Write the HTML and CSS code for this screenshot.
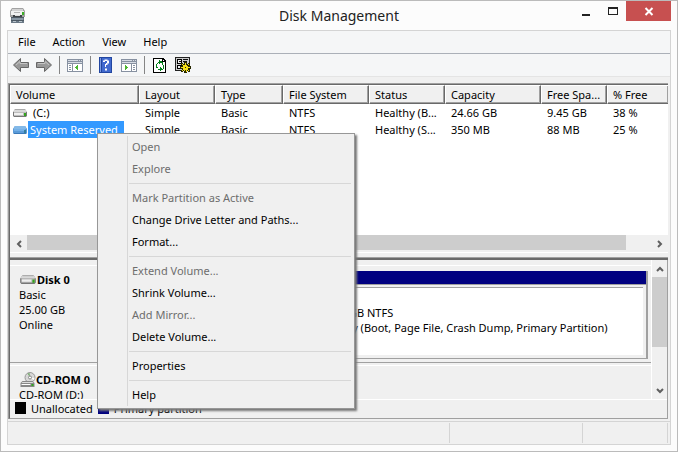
FILE: index.html
```html
<!DOCTYPE html>
<html lang="en">
<head>
<meta charset="utf-8">
<title>Disk Management</title>
<link rel="stylesheet" href="styles.css">
</head>
<body>
<svg class="defs" aria-hidden="true">
  <symbol id="drive" viewBox="0 0 16 10">
    <path d="M3 1h10l2 3v4l-1 1H2L1 8V4z" fill="#8b8b8b"/>
    <path d="M3 1h10l2 3H1z" fill="#d9d9d9"/>
    <path d="M3 1h10v1H3z" fill="#a9a9a9"/>
    <path d="M1 4h14v4H1z" fill="#bdbdbd"/>
    <path d="M2 5h9v2H2z" fill="#efefef"/>
    <path d="M1 4h1v4H1zM14 4h1v4h-1zM2 8h12v1H2z" fill="#777"/>
    <path d="M12 5h2v3h-2z" fill="#33a51d"/>
  </symbol>
  <symbol id="drive-selected" viewBox="0 0 16 10">
    <path d="M3 1h10l2 3v4l-1 1H2L1 8V4z" fill="#3979b8"/>
    <path d="M3 1h10l2 3H1z" fill="#83b9e8"/>
    <path d="M1 4h14v4H1z" fill="#5b9bd8"/>
    <path d="M2 4h11v2H2z" fill="#75b1e7"/>
    <path d="M12 5h2v3h-2z" fill="#357f9e"/>
  </symbol>
</svg>

<div class="window">
  <header class="titlebar">
    <svg class="app-icon" viewBox="0 0 18 16" aria-hidden="true">
      <path d="M2 9h13v6H2z" fill="#6b7986"/>
      <path d="M2 9h13v1H2zM2 12h13v1H2z" fill="#4d5964"/>
      <path d="M3 10h11v2H3z" fill="#8a98a5"/>
      <path d="M4 13h3v1H4zM10 13h3v1h-3z" fill="#b9c4cc"/>
      <path d="M3 0h11l2 3v6H1V3z" fill="#a2a2a2"/>
      <path d="M3 1h11v2H3z" fill="#d2d2d2"/>
      <path d="M2 3h13v4H2z" fill="#f1f1f1"/>
      <path d="M4 7h9v2H4z" fill="#3e4246"/>
      <path d="M5 4h6v1H5z" fill="#b4b4b4"/>
      <path d="M6 7h5v1H6z" fill="#ddd"/>
      <path d="M13 4h2v3h-2z" fill="#3caf27"/>
    </svg>
    <h1 class="title">Disk Management</h1>
    <div class="caption-buttons">
      <button class="caption" aria-label="Minimize"><svg viewBox="0 0 10 10"><path d="M1 8h8v2H1z"/></svg></button>
      <button class="caption" aria-label="Maximize"><svg viewBox="0 0 10 10"><path d="M0 1h10v8H0zM1 3v5h8V3z" fill-rule="evenodd"/></svg></button>
      <button class="caption close" aria-label="Close"><svg viewBox="0 0 10 10"><path d="M1.500 2l7 7M8.500 2l-7 7" fill="none" stroke="#fff" stroke-width="2"/></svg></button>
    </div>
  </header>

  <main class="client">
    <nav class="menubar" aria-label="Main">
      <button>File</button><button>Action</button><button>View</button><button>Help</button>
    </nav>

    <div class="toolbar" role="toolbar">
      <button aria-label="Back"><svg viewBox="0 0 16 16"><path d="M.5 8l7-6.500v4h8v5h-8v4z" fill="#999" stroke="#666"/><path d="M3 8l4-3.500v2h7" fill="none" stroke="#c4c4c4"/></svg></button>
      <button aria-label="Forward"><svg viewBox="0 0 16 16"><path d="M15.500 8l-7-6.500v4h-8v5h8v4z" fill="#999" stroke="#666"/><path d="M2 6.500h7v-2L13 8" fill="none" stroke="#c4c4c4"/></svg></button>
      <span class="divider"></span>
      <button aria-label="Show console tree"><svg viewBox="0 0 16 16" shape-rendering="crispEdges"><path d="M0 2h16v13H0z" fill="#8791a1"/><path d="M1 5h14v9H1z" fill="#fff"/><path d="M1 3h10v1H1zM12 3h1v1h-1zM14 3h1v1h-1zM1 5h14v1H1z" fill="#d7dce4"/><path d="M1 6h14v1H1zM5 7h1v7H5zM2 8h2v1H2zM2 10h2v1H2zM2 12h2v1H2z" fill="#8791a1"/><path d="M10 8h1v5h-1v-1H9v-1H8v-1h1V9h1z" fill="#4cb530"/></svg></button>
      <span class="divider"></span>
      <button aria-label="Help topics"><svg viewBox="0 0 16 16"><path d="M1 0h13v16H1z" fill="#2246a0"/><path d="M4 1h9v14H4z" fill="#4169ce"/><path d="M2 1h1v14H2z" fill="#7c9be3"/><path d="M5 5V3.500h1.500v-1h3v1H11v3H9.500V8H8v2H7V7h1V6h1V4H7v1zM7 11.500h2v2H7z" fill="#fff"/></svg></button>
      <button aria-label="Show action pane"><svg viewBox="0 0 16 16" shape-rendering="crispEdges"><path d="M0 2h16v13H0z" fill="#8791a1"/><path d="M1 5h14v9H1z" fill="#fff"/><path d="M1 3h10v1H1zM12 3h1v1h-1zM14 3h1v1h-1zM1 5h14v1H1z" fill="#d7dce4"/><path d="M1 6h14v1H1zM10 7h1v7h-1zM12 8h2v1h-2zM12 10h2v1h-2zM12 12h2v1h-2z" fill="#8791a1"/><path d="M4 8h1v1h1v1h1v1H6v1H5v1H4z" fill="#4cb530"/></svg></button>
      <span class="divider"></span>
      <button aria-label="Refresh"><svg viewBox="0 0 16 16" shape-rendering="crispEdges"><path d="M1 1h10l3 3v12H1z" fill="#000"/><path d="M2 2h8v3h3v10H2z" fill="#fff"/><path d="M11 3h1v1h-1z" fill="#fff"/><path d="M7 3h1v1h2v1h1v3h-1V6H8v1H7V6H6V5h1zM5 6h1v1H5zM4 7h1v3h1v1H4zM11 8h1v4h-1zM8 10h1v1h1v1h1v1H9v1H8v-1H6v-1h2z" fill="#008018"/></svg></button>
      <button aria-label="Settings"><svg viewBox="0 0 16 16" shape-rendering="crispEdges"><path d="M0 0h15v14H0z" fill="#222"/><path d="M1 1h13v12H1z" fill="#ccc"/><path d="M2 2h5v5H2zM2 8h5v4H2z" fill="#000"/><path d="M3 3h3v3H3zM3 9h3v2H3z" fill="#eee"/><path d="M4 4h2v1H4zM8 2h5v1H8zM8 4h4v1H8z" fill="#111"/><path d="M9 5h3v2h1V6h2v2h-1v1h2v3h-2v1h1v2h-2v-1h-1v2H9v-2H8v1H6v-2h1v-1H5V9h2V8H6V6h2v1h1z" fill="#272700"/><path d="M10 6h1v2h1v1h1V7h1v1h-1v2h2v1h-2v2h1v1h-1v-1h-1v2h-1v-2h-1v1H9v-1H8v1H7v-1h1v-2H6v-1h2V8H7V7h1v1h2z" fill="#f4df19"/><path d="M10 10h1v1h-1z" fill="#222"/></svg></button>
    </div>

    <div class="workspace">
      <section class="volumes">
        <table class="volume-table">
          <colgroup><col class="c-volume"><col class="c-medium"><col class="c-type"><col class="c-fs"><col class="c-medium"><col class="c-capacity"><col class="c-free"><col></colgroup>
          <thead>
            <tr><th>Volume</th><th>Layout</th><th>Type</th><th>File System</th><th>Status</th><th>Capacity</th><th>Free Spa...</th><th>% Free</th></tr>
          </thead>
          <tbody>
            <tr><td><span class="volume"><svg class="drive"><use href="#drive"/></svg><span class="name">(C:)</span></span></td><td>Simple</td><td>Basic</td><td>NTFS</td><td>Healthy (B...</td><td>24.66 GB</td><td>9.45 GB</td><td>38 %</td></tr>
            <tr><td><span class="volume"><svg class="drive"><use href="#drive-selected"/></svg><span class="name selected">System Reserved</span></span></td><td>Simple</td><td>Basic</td><td>NTFS</td><td>Healthy (S...</td><td>350 MB</td><td>88 MB</td><td>25 %</td></tr>
          </tbody>
        </table>
        <div class="hscroll">
          <button aria-label="Scroll left"><svg viewBox="0 0 8 8"><path d="M6 1L3 4l3 3"/></svg></button>
          <div class="htrack"><div class="hthumb"></div></div>
          <button aria-label="Scroll right"><svg viewBox="0 0 8 8"><path d="M2 1l3 3-3 3"/></svg></button>
        </div>
        <div class="splitter"></div>
      </section>

      <section class="disks">
        <div class="disk-view">
          <div class="disk-list">
            <article class="disk">
              <div class="disk-info">
                <h2><svg class="drive"><use href="#drive"/></svg>Disk 0</h2>
                <p>Basic</p><p>25.00 GB</p><p>Online</p>
              </div>
              <div class="partition reserved">
                <div class="stripe"></div>
                <div class="partition-body"></div>
              </div>
              <div class="partition">
                <div class="stripe"></div>
                <div class="partition-body"><strong>(C:)</strong><p>24.66 GB NTFS</p><p>Healthy (Boot, Page File, Crash Dump, Primary Partition)</p></div>
              </div>
            </article>
            <article class="disk cdrom">
              <div class="disk-info">
                <h2><svg class="cd" viewBox="0 0 16 16"><circle cx="10.500" cy="5.500" r="5" fill="#d8d8d8" stroke="#999"/><path d="M10.500 5.500L8 1.500l2-.5z" fill="#75a96c"/><path d="M10.500 5.500l4 2.500.5-2z" fill="#fff"/><circle cx="10.500" cy="5.500" r="1.500" fill="#fff" stroke="#888"/><path d="M3 9h10l2 2v4H1v-4z" fill="#888"/><path d="M3 10h10l1 1H2z" fill="#ddd"/><path d="M2 12h9v1H2z" fill="#fff"/><path d="M12 12h2v2h-2z" fill="#31a721"/></svg>CD-ROM 0</h2>
                <p>CD-ROM (D:)</p>
              </div>
            </article>
          </div>
          <div class="vscroll">
            <button aria-label="Scroll up"><svg viewBox="0 0 8 8"><path d="M1 6l3-3 3 3"/></svg></button>
            <div class="vtrack"><div class="vthumb"></div></div>
            <button aria-label="Scroll down"><svg viewBox="0 0 8 8"><path d="M1 2l3 3 3-3"/></svg></button>
          </div>
        </div>
        <div class="legend">
          <span class="swatch"></span><span>Unallocated</span>
          <span class="swatch primary"></span><span>Primary partition</span>
        </div>
      </section>
    </div>

    <footer class="statusbar"><span class="grow"></span><span></span><span class="last"></span></footer>
  </main>

  <div class="context-menu" role="menu">
    <button role="menuitem" disabled>Open</button>
    <button role="menuitem" disabled>Explore</button>
    <hr>
    <button role="menuitem" disabled>Mark Partition as Active</button>
    <button role="menuitem">Change Drive Letter and Paths...</button>
    <button role="menuitem">Format...</button>
    <hr>
    <button role="menuitem" disabled>Extend Volume...</button>
    <button role="menuitem">Shrink Volume...</button>
    <button role="menuitem" disabled>Add Mirror...</button>
    <button role="menuitem">Delete Volume...</button>
    <hr>
    <button role="menuitem">Properties</button>
    <hr>
    <button role="menuitem">Help</button>
  </div>
</div>
</body>
</html>
```
FILE: styles.css
```css
* { box-sizing: border-box; }

body {
  margin: 0;
  color: #000;
  font: 11px/15px "Segoe UI", "Noto Sans", sans-serif;
}

h1, h2, p { margin: 0; font-size: inherit; }

button {
  padding: 0;
  border: 0;
  background: none;
  color: inherit;
  font: inherit;
}

.defs { position: absolute; width: 0; height: 0; }

.window {
  position: relative;
  display: flex;
  flex-direction: column;
  min-height: 100vh;
  padding: 0 6px 6px;
  border: 1px solid #bbb;
  background: #fcfcfc;
}

.titlebar {
  display: grid;
  grid-template-columns: 1fr auto 1fr;
  align-items: center;
  height: 29px;
}
.app-icon { width: 18px; height: 16px; margin-left: 2px; }
.title { color: #222; font-size: 14px; font-weight: 400; line-height: 20px; }
.caption-buttons { display: flex; justify-content: flex-end; align-self: start; }
.caption { width: 27px; height: 20px; }
.caption svg { display: block; width: 10px; height: 10px; margin: auto; fill: #222; }
.caption.close { width: 45px; background: #c75050; }

.client {
  display: flex;
  flex: 1;
  flex-direction: column;
  border: 1px solid #d4d4d4;
  background: #f0f0f0;
}

.menubar {
  display: flex;
  gap: 17px;
  height: 23px;
  padding: 0 0 2px 10px;
  border-bottom: 1px solid #abb0b8;
  background: #f5f6f7;
}

.toolbar {
  display: flex;
  align-items: center;
  height: 23px;
  padding-left: 5px;
  border-bottom: 1px solid #e4e4e4;
  background: #f5f6f7;
}
.toolbar button { width: 23px; height: 18px; }
.toolbar svg { display: block; width: 16px; height: 16px; }
.divider { width: 1px; height: 18px; margin-right: 7px; background: #858585; }

.workspace {
  display: flex;
  flex: 1;
  flex-direction: column;
  margin: 6px 2px 2px 0;
  border-left: 1px solid #999;
  border-top: 1px solid #a0a0a0;
}

.volumes {
  display: flex;
  flex: 1;
  flex-direction: column;
  border: 1px solid #696969;
  border-right: 0;
  border-bottom: 2px solid #696969;
  background: #fff;
}
.volume-table {
  width: 100%;
  border-collapse: separate;
  border-spacing: 0;
  table-layout: fixed;
  white-space: nowrap;
}
.c-volume { width: 129px; }
.c-medium { width: 76px; }
.c-type { width: 68px; }
.c-fs { width: 86px; }
.c-capacity { width: 96px; }
.c-free { width: 66px; }
.volume-table th {
  height: 19px;
  padding: 0 5px 1px;
  border: 1px solid #fff;
  border-right: 1px solid #696969;
  border-bottom: 1px solid #696969;
  background: #f0f0f0;
  box-shadow: inset -1px -1px #a0a0a0;
  font-weight: 400;
  text-align: left;
}
.volume-table th:last-child { border-right: 0; }
.volume-table td { height: 17px; padding: 0 0 0 6px; }
.volume-table td:first-child { padding-left: 2px; }
.volume { display: flex; align-items: center; }
.drive { flex: none; width: 16px; height: 10px; }
.name { height: 17px; padding: 1px 6px 1px 2px; }
.name:not(.selected) { padding-left: 5px; }
.selected { background: #3399ff; color: #fff; }

.hscroll { display: flex; height: 17px; margin-top: auto; background: #f0f0f0; }
.hscroll button, .vscroll button { flex: none; width: 17px; height: 17px; }
.hscroll svg, .vscroll svg { display: block; width: 8px; height: 8px; margin: auto; fill: none; stroke: #606060; stroke-width: 2; }
.htrack { flex: 1; }
.hthumb { width: 96%; height: 15px; background: #cdcdcd; }
.splitter { height: 6px; border-top: 1px solid #fff; border-bottom: 1px solid #a0a0a0; background: #f0f0f0; }

.disks { border-left: 1px solid #696969; border-right: 1px solid #a0a0a0; border-bottom: 1px solid #a0a0a0; }
.disk-view { display: flex; height: 139px; }
.disk-list { flex: 1; min-width: 0; overflow: hidden; padding-top: 5px; border-right: 1px solid #fff; }
.disk {
  display: flex;
  height: 98px;
  padding: 5px 3px 3px 0;
  border-top: 1px solid #fff;
  border-bottom: 1px solid #a0a0a0;
}
.disk.cdrom { margin-top: 2px; }
.disk-info { flex: none; width: 106px; padding: 1px 0 0 9px; }
.disk-info h2 { display: flex; align-items: center; height: 15px; white-space: nowrap; }
.disk-info .drive { width: 18px; height: 11px; }
.cd { width: 17px; height: 16px; flex: none; }
.partition {
  display: flex;
  flex: 1;
  flex-direction: column;
  border-right: 2px solid #a0a0a0;
  border-bottom: 1px solid #a0a0a0;
}
.partition.reserved { flex: 0 0 195px; margin-right: 3px; }
.stripe { flex: none; height: 14px; border-bottom: 1px solid #a0a0a0; background: #000080; }
.partition-body { flex: 1; margin: 2px 3px 3px 0; padding: 2px 4px; border-top: 1px solid #a0a0a0; background: #fff; white-space: nowrap; }

.vscroll { display: flex; flex: none; flex-direction: column; width: 15px; }
.vscroll button { width: 15px; }
.vtrack { flex: 1; }
.vthumb { height: 70px; background: #cdcdcd; }

.legend { display: flex; align-items: center; gap: 5px; height: 19px; padding: 0 0 2px 5px; border-top: 1px solid #fff; }
.swatch { width: 11px; height: 12px; background: #000; }
.swatch.primary { background: #000080; }

.statusbar { display: flex; height: 23px; padding-top: 1px; border-top: 1px solid #d4d4d4; }
.statusbar span { flex: 0 0 133px; height: 20px; border-right: 1px solid #d4d4d4; }
.statusbar .grow { flex: 1; }
.statusbar .last { flex-basis: 85px; margin-right: 2px; }

.context-menu {
  position: absolute;
  left: 96px;
  top: 132px;
  width: 258px;
  padding: 2px;
  border: 1px solid #979797;
  background: linear-gradient(#d7d7d7, #d7d7d7) 29px 2px / 1px calc(100% - 4px) no-repeat #f0f0f0;
  box-shadow: 2px 2px 2px #777;
}
.context-menu button { display: block; width: 100%; height: 22px; padding: 0 0 2px 32px; text-align: left; }
.context-menu button:disabled { color: #6d6d6d; }
.context-menu hr { height: 1px; margin: 3px 1px 3px 29px; border: 0; background: #d7d7d7; }
```
